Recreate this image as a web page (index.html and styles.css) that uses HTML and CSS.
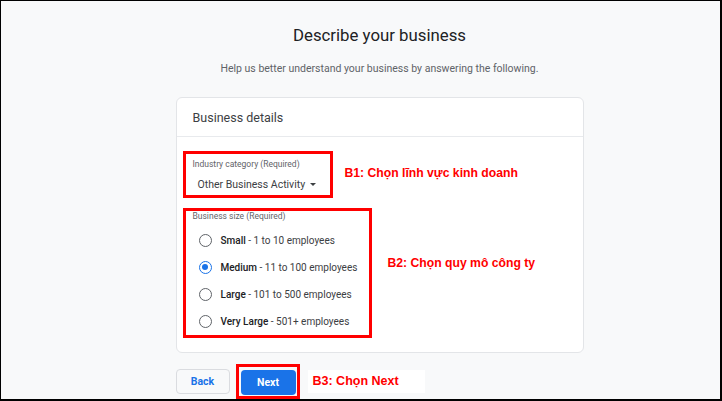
FILE: index.html
```html
<!DOCTYPE html>
<html>
<head>
<meta charset="utf-8">
<link rel="stylesheet" href="styles.css">
</head>
<body>
<div class="frame">
  <h1 class="title">Describe your business</h1>
  <p class="subtitle">Help us better understand your business by answering the following.</p>
  <div class="card">
    <div class="card-head">Business details</div>
    <div class="card-body">
      <div class="mark mark-industry">
        <div class="field-label">Industry category (Required)</div>
        <div class="select">Other Business Activity <span class="caret"></span></div>
      </div>
      <div class="mark mark-size">
        <div class="field-label size-label">Business size (Required)</div>
        <div class="radios">
          <div class="radio-row"><span class="radio"></span><span class="opt"><b>Small</b> - 1 to 10 employees</span></div>
          <div class="radio-row"><span class="radio checked"></span><span class="opt"><b>Medium</b> - 11 to 100 employees</span></div>
          <div class="radio-row"><span class="radio"></span><span class="opt"><b>Large</b> - 101 to 500 employees</span></div>
          <div class="radio-row"><span class="radio"></span><span class="opt"><b>Very Large</b> - 501+ employees</span></div>
        </div>
      </div>
      <div class="note note-b1">B1: Chọn lĩnh vực kinh doanh</div>
      <div class="note note-b2">B2: Chọn quy mô công ty</div>
    </div>
  </div>
  <div class="actions">
    <button class="btn btn-back">Back</button>
    <div class="mark mark-next"><button class="btn btn-next">Next</button></div>
    <div class="note-b3">B3: Chọn Next</div>
  </div>
</div>
</body>
</html>
```
FILE: styles.css
```css
* { box-sizing: border-box; }
html, body { margin: 0; padding: 0; }
body { background: #000; font-family: Roboto, "Liberation Sans", sans-serif; }
.frame {
  width: 722px;
  height: 401px;
  border: solid #000;
  border-width: 1px 2px 2px 1px;
  background: #f8f9fa;
  display: flex;
  flex-direction: column;
  align-items: center;
  overflow: hidden;
}
.title {
  margin: 22px 0 0 0;
  font-size: 16.8px;
  line-height: 24px;
  font-weight: 400;
  color: #202124;
  padding-left: 38px;
}
.subtitle {
  margin: 15px 0 0 0;
  font-size: 10.5px;
  line-height: 14px;
  color: #5f6368;
  padding-left: 38px;
}
.card {
  margin: 21px 0 0 0;
  margin-left: 38px;
  width: 408px;
  height: 256px;
  background: #fff;
  border: 1px solid #e3e5e8;
  border-radius: 6px;
}
.card-head {
  height: 39px;
  padding: 12px 0 0 16px;
  font-size: 12.5px;
  color: #3c4043;
  border-bottom: 1px solid #e8eaed;
}
.card-body {
  position: relative;
  padding: 14px 0 0 6px;
  display: flex;
  flex-direction: column;
  align-items: flex-start;
  gap: 10px;
}
.mark { border: 3px solid #ff0000; }
.mark-industry {
  width: 150px;
  height: 47px;
  padding: 5px 0 0 7px;
}
.field-label {
  font-size: 8.5px;
  line-height: 11px;
  color: #5f6368;
}
.select {
  margin: 8px 0 0 5px;
  font-size: 10.5px;
  color: #3c4043;
  display: flex;
  align-items: center;
  gap: 5px;
}
.caret {
  width: 0; height: 0;
  border-left: 3px solid transparent;
  border-right: 3px solid transparent;
  border-top: 3px solid #3c4043;
}
.mark-size {
  width: 189px;
  height: 130px;
  padding: 0 0 0 7px;
}
.size-label { margin-top: 0; line-height: 10px; }
.radios {
  margin-top: 12px;
  display: flex;
  flex-direction: column;
  gap: 13px;
}
.radio-row {
  display: flex;
  align-items: center;
  gap: 9px;
  height: 14px;
  padding-left: 6px;
}
.radio {
  width: 13px; height: 13px;
  border-radius: 50%;
  border: 1.5px solid #5f6368;
  display: flex;
  align-items: center;
  justify-content: center;
  flex: none;
}
.radio.checked { border-color: #1a73e8; }
.radio.checked::after {
  content: "";
  width: 6px; height: 6px;
  border-radius: 50%;
  background: #1a73e8;
}
.opt { font-size: 10px; color: #3c4043; }
.opt b { font-weight: 500; color: #202124; }
.note {
  position: absolute;
  color: #ff0000;
  font-family: "Liberation Sans", Arial, sans-serif;
  font-weight: 700;
  font-size: 12.2px;
  white-space: nowrap;
}
.note-b1 { left: 168px; top: 29px; }
.note-b2 { left: 211px; top: 119px; }
.actions {
  margin: 11px 0 0 0;
  width: 408px;
  margin-left: 38px;
  display: flex;
  align-items: center;
}
.btn {
  height: 25px;
  border-radius: 4px;
  font-family: Roboto, "Liberation Sans", sans-serif;
  font-size: 10.5px;
  font-weight: 700;
  padding: 0;
}
.btn-back {
  width: 54px;
  background: #f8f9fa;
  border: 1px solid #dadce0;
  color: #1a73e8;
}
.mark-next {
  margin-left: 6px;
  width: 64px;
  height: 35px;
  padding: 3px 0 0 2px;
}
.btn-next {
  width: 55px;
  background: #1a73e8;
  border: none;
  color: #fff;
}
.note-b3 {
  margin-left: 8px;
  width: 117px;
  height: 23px;
  background: #fff;
  color: #ff0000;
  font-family: "Liberation Sans", Arial, sans-serif;
  font-weight: 700;
  font-size: 12.5px;
  padding: 4px 0 0 5px;
}
```
